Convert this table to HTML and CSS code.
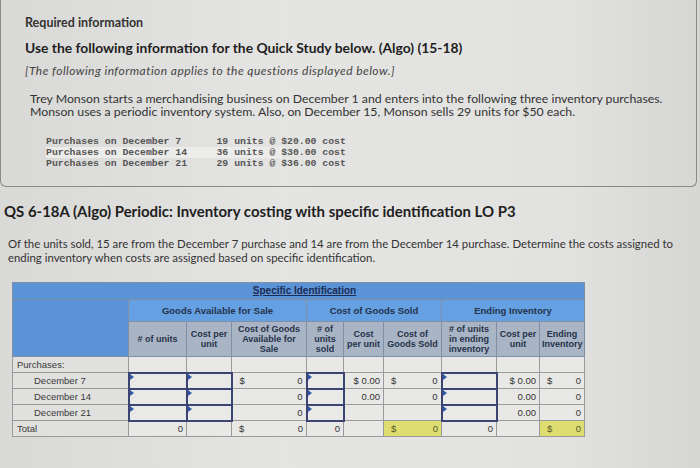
FILE: index.html
```html
<!DOCTYPE html>
<html>
<head>
<meta charset="utf-8">
<link rel="stylesheet" href="styles.css">
</head>
<body>
<section class="panel">
  <div class="req">Required information</div>
  <h2 class="use">Use the following information for the Quick Study below. (Algo) (15-18)</h2>
  <p class="note">[The following information applies to the questions displayed below.]</p>
  <p class="intro">Trey Monson starts a merchandising business on December 1 and enters into the following three inventory purchases. Monson uses a periodic inventory system. Also, on December 15, Monson sells 29 units for $50 each.</p>
  <div class="mono">
    <div class="mline">Purchases on December 7      19 units @ $20.00 cost</div>
    <div class="mline alt">Purchases on December 14     36 units @ $30.00 cost</div>
    <div class="mline">Purchases on December 21     29 units @ $36.00 cost</div>
  </div>
</section>
<h1 class="qs">QS 6-18A (Algo) Periodic: Inventory costing with specific identification LO P3</h1>
<p class="task">Of the units sold, 15 are from the December 7 purchase and 14 are from the December 14 purchase. Determine the costs assigned to ending inventory when costs are assigned based on specific identification.</p>

<table class="grid">
  <colgroup>
    <col class="c-lab"><col class="c-u"><col class="c-cpu"><col class="c-cga">
    <col class="c-us"><col class="c-cpus"><col class="c-cgs">
    <col class="c-ue"><col class="c-cpue"><col class="c-ei">
  </colgroup>
  <tr class="h1"><th colspan="10"><span class="link">Specific Identification</span></th></tr>
  <tr class="h2">
    <th rowspan="2" class="blank"></th>
    <th colspan="3">Goods Available for Sale</th>
    <th colspan="3">Cost of Goods Sold</th>
    <th colspan="3">Ending Inventory</th>
  </tr>
  <tr class="h3">
    <th># of units</th>
    <th>Cost per unit</th>
    <th>Cost of Goods Available for Sale</th>
    <th># of units sold</th>
    <th>Cost per unit</th>
    <th>Cost of Goods Sold</th>
    <th># of units in ending inventory</th>
    <th>Cost per unit</th>
    <th>Ending Inventory</th>
  </tr>
  <tr>
    <td class="lab">Purchases:</td>
    <td></td><td></td><td></td><td></td><td></td><td></td><td></td><td></td><td></td>
  </tr>
  <tr>
    <td class="lab ind">December 7</td>
    <td class="in"></td><td class="in"></td>
    <td class="num"><span class="d">$</span>0</td>
    <td class="in"></td>
    <td class="num">$ 0.00</td>
    <td class="num"><span class="d">$</span>0</td>
    <td class="in"></td>
    <td class="num">$ 0.00</td>
    <td class="num"><span class="d">$</span>0</td>
  </tr>
  <tr>
    <td class="lab ind">December 14</td>
    <td class="in"></td><td class="in"></td>
    <td class="num">0</td>
    <td class="in"></td>
    <td class="num">0.00</td>
    <td class="num">0</td>
    <td class="in"></td>
    <td class="num">0.00</td>
    <td class="num">0</td>
  </tr>
  <tr>
    <td class="lab ind">December 21</td>
    <td class="in"></td><td class="in"></td>
    <td class="num">0</td>
    <td class="in"></td>
    <td></td>
    <td></td>
    <td class="in"></td>
    <td class="num">0.00</td>
    <td class="num">0</td>
  </tr>
  <tr class="tot">
    <td class="lab">Total</td>
    <td class="num">0</td>
    <td></td>
    <td class="num"><span class="d">$</span>0</td>
    <td class="num">0</td>
    <td></td>
    <td class="num hl"><span class="d">$</span>0</td>
    <td class="num">0</td>
    <td></td>
    <td class="num hl"><span class="d">$</span>0</td>
  </tr>
</table>
</body>
</html>
```

FILE: styles.css
```css
html, body {
  margin: 0;
  padding: 0;
}
body {
  width: 700px;
  height: 468px;
  overflow: hidden;
  background: linear-gradient(90deg, #d9d9d7 0%, #e4e4e2 40%, #e2e2e0 80%, #d6d6d4 100%);
  font-family: Lato, "Open Sans", Arial, sans-serif;
  color: #2a2a2a;
}
.panel {
  margin: 0 3px 0 0;
  padding: 15px 0 17px 24px;
  border: 1px solid #8a8a8a;
  border-top: none;
  border-radius: 0 0 6px 6px;
}
.req {
  font-size: 12.5px;
  font-weight: bold;
  color: #333;
  line-height: 16px;
}
.use {
  margin: 8px 0 0;
  font-size: 13.85px;
  font-weight: bold;
  color: #1e1e1e;
  line-height: 18px;
}
.note {
  margin: 6px 0 0;
  font-size: 12px;
  letter-spacing: 0.45px;
  font-style: italic;
  color: #444;
  line-height: 16px;
}
.intro {
  margin: 13px 0 0 5px;
  font-size: 12.3px;
  color: #333;
  line-height: 13px;
  width: 640px;
}
.mono {
  margin: 18px 0 0 21px;
  font-family: "Liberation Mono", "DejaVu Sans Mono", monospace;
  font-size: 9.8px;
  font-weight: bold;
  color: #555;
  line-height: 11px;
}
.mline {
  white-space: pre;
  width: 236px;
}
.mline.alt {
  background: #ececea;
}
.qs {
  margin: 15px 0 0 4px;
  font-size: 14.95px;
  font-weight: bold;
  color: #1e1e1e;
  line-height: 18px;
}
.task {
  margin: 17px 0 0 8px;
  font-size: 11.4px;
  color: #333;
  line-height: 14px;
  width: 684px;
}
.grid {
  margin: 17px 0 0 12px;
  border-collapse: collapse;
  table-layout: fixed;
  width: 572px;
  font-family: "Liberation Sans", Arial, sans-serif;
  font-size: 9.5px;
  color: #333;
}
.c-lab { width: 116px; }
.c-u { width: 58px; }
.c-cpu { width: 45px; }
.c-cga { width: 75px; }
.c-us { width: 37px; }
.c-cpus { width: 40px; }
.c-cgs { width: 58px; }
.c-ue { width: 55px; }
.c-cpue { width: 43px; }
.c-ei { width: 45px; }
.grid th {
  box-sizing: border-box;
  border: 1px solid #7f8fa6;
  font-weight: bold;
  color: #26324a;
  padding: 0 2px;
  line-height: 10px;
}
.h1 th {
  height: 17px;
  background: #5a93d6;
  text-align: center;
  padding-left: 14px;
  font-size: 10px;
}
.link {
  text-decoration: underline;
  color: #1d2b55;
}
.h2 th {
  height: 22px;
  background: #64a0e2;
  font-size: 9.5px;
}
.h2 th.blank {
  background: #5a93d6;
}
.h3 th {
  height: 35px;
  background: #a9b5c4;
  font-size: 9px;
}
.grid td {
  box-sizing: border-box;
  height: 16px;
  border: 1px solid #9a9a9a;
  background: #e8e8e6;
  padding: 0 3px;
  line-height: 12px;
}
.grid td.lab {
  background: #e0e0de;
  color: #3a3a3a;
  padding-left: 4px;
}
.grid td.ind {
  padding-left: 21px;
}
.grid td.num {
  text-align: right;
}
.d {
  float: left;
  padding-left: 4px;
}
.grid td.in {
  border: 2px solid #3b4472;
  background: #e9e9e8;
  position: relative;
}
.grid td.in::before {
  content: "";
  position: absolute;
  left: 0;
  top: 0;
  border-top: 3px solid transparent;
  border-bottom: 3px solid transparent;
  border-left: 4px solid #2f5aa8;
}
.grid td.hl {
  background: #dedd72;
  color: #555a2a;
}
```
